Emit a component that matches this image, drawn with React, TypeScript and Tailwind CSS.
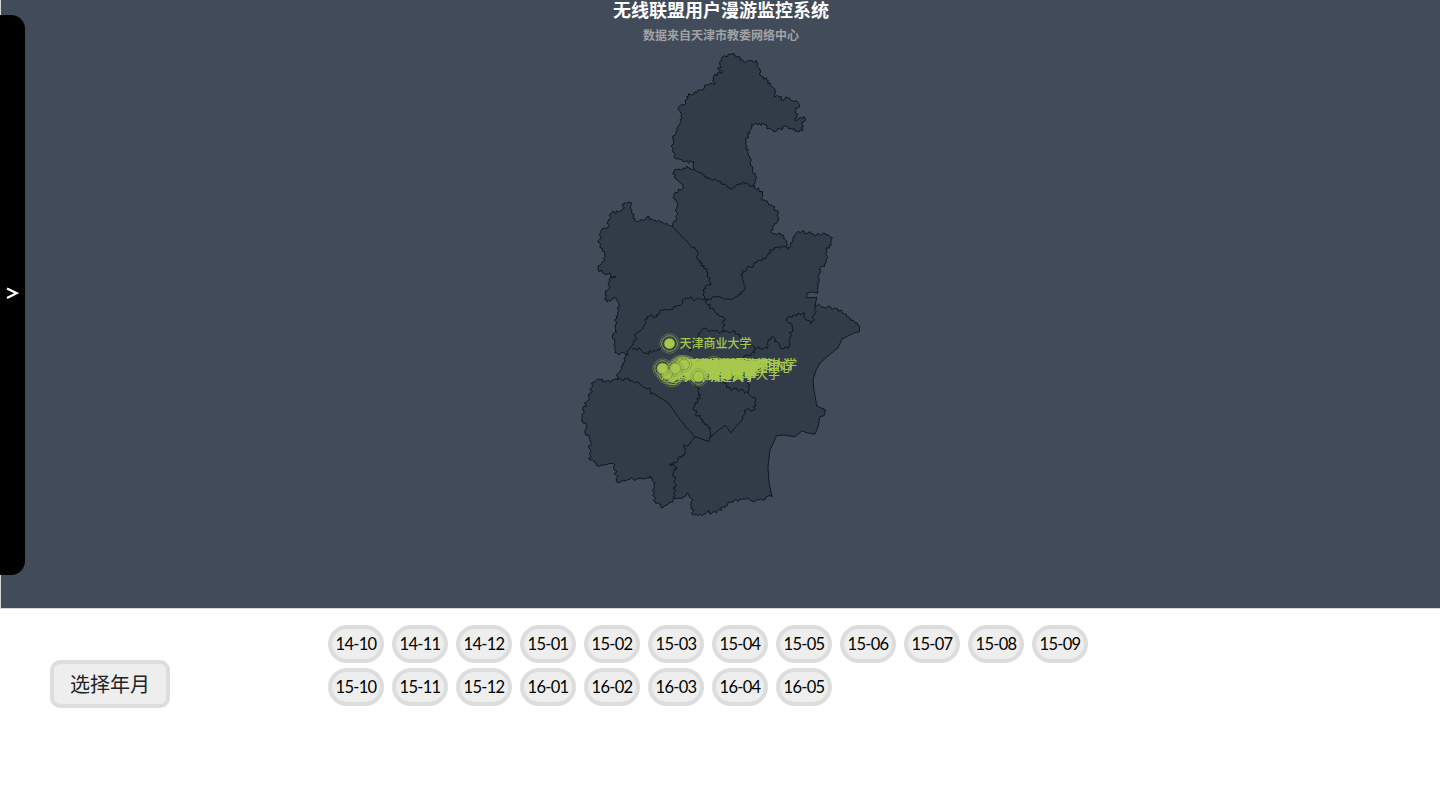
import React from "react";

type Pt = [number, number];

const parse = (s: string): Pt[] =>
  s.trim().split(/\s+/).map((p) => p.split(",").map(Number) as Pt);

// Gives a surveyed polyline the small irregular steps of a county border.
function rough(s: string, amp = 1.8): string {
  const pts = parse(s);
  let out = "";
  for (let i = 0; i < pts.length - 1; i++) {
    const [x0, y0] = pts[i];
    const [x1, y1] = pts[i + 1];
    const len = Math.hypot(x1 - x0, y1 - y0) || 1;
    const n = Math.max(1, Math.round(len / 1.7));
    for (let k = 0; k < n; k++) {
      const t = k / n;
      const x = x0 + (x1 - x0) * t;
      const y = y0 + (y1 - y0) * t;
      const h = Math.sin(x * 12.9898 + y * 78.233) * 43758.5453;
      const d = k === 0 ? 0 : (h - Math.floor(h) - 0.5) * 2 * amp;
      out += `L${(x - ((y1 - y0) / len) * d).toFixed(1)} ${(y + ((x1 - x0) / len) * d).toFixed(1)}`;
    }
  }
  const [lx, ly] = pts[pts.length - 1];
  return out + `L${lx} ${ly}`;
}

const line = (s: string, amp?: number) => "M" + rough(s, amp).slice(1);

const NORTH =
  "719,70 720,64 722,58 727,57 732,53.5 735,56 738,57 743,60.7 750,61 757,60.7 758,67 759.3,74 766.7,80 772.7,87.3 775,92 774.7,97.3 779,97 783,100 788,97.7 792,101 796,101 800,106.7 795,108 795,111.7 798,114 794.7,118.3 798,120 803.3,116.5 804.3,121.7 802,125 801.7,131 797,131 791,128 785,126 780,129 773,131 766.7,128.3 764,124.3 758,125 751.7,124.3 750,133.3 746,138 746,145 748,155 752.7,166.7 752,172 756.7,178.3 755,187.7 763,191.7 761,198.3 768,203 775,206.7 778,216.7 774,226 770,231.7 776.7,235 780,233 784,236.7 786,243 788,249.3 792.7,241.7 793,237 796.7,232.7 802,231.5 808,232.7 816.7,235 825,233.3 832.5,238 829,246 826.7,250 826,263 820,270 819,281 816.7,284 818,293";
const COAST = "818,293 812,292 807,293 806.7,298 816.7,297 815,305";
const EAST =
  "815,305 823,307 831,308 838,309 846.7,316.7 853,320 855,323 859.5,326";
const SEA =
  "859.5,326 859.5,331.7 855,332.7 850,335 841.7,339.3 838,348 826.7,357 820,363 816,370 813,380 814,390 816.7,406 825.7,410 824,415.7 820,416.7 818,426.7 815,434 808,433 801.7,431 795,436.7 784,435 776.7,435.7 770,450 768,466.7 769,483 772,496.7";
const SOUTH =
  "772,496.7 760,499 752,501 749,499 743,499 733,502 723,507 716.7,512.7 711,514 709,510 705,514 693,515 691.7,506.7 693,500 687,493 680,498 674,499 669,503 663,507.7 655,501.7 652.7,491.7 655,483 650,475.7 645,479 633,479 616.7,482 615,465 608,464 598,466 590,460 590,436 585.7,435 585.7,423 582.5,422.7 583,410 590.7,393 591.7,383 600,380 606.7,381.7 616.7,379 620,371.7 625,360 626,355 615,352.7 612.7,336 617,331.7 616,316.7 619,305 615,298 606.7,302 605,295 610,286.7 609,279 616,276.7 608,274 598,270 600,265 605,260 604,251.7 599,243 601.7,230 607,228 610,219 612,213 621.7,210.7 625,203 631.7,203 631.7,211.7 636.7,221.7 641,220 646.7,217 660,221.7 672,226 672.7,226 676.7,220 676.7,208.3 674,194 683,186.7 675,178.3 674,171.7 683.3,167.7 690,168 694,169 694,161.7 685,161.7 674,156.7 671.7,145 675,135 680,123 682,115 679,106.7 684,105 686.7,96.7 695,91.7 701,90 706.7,85 714,85 714,76 723,71.7 719,70";

const outline =
  line(NORTH) + rough(COAST, 0.3) + rough(EAST) + rough(SEA, 0.15) + rough(SOUTH) + "Z";

const borders = [
  "755,187.7 748,184 740,183.3 730,189 720,180.7 710,178.3 700,172.7 694,169",
  "690,245 694,247 696.7,250 698,260 708,273 710.7,285 705,286.7 704,293 708,305",
  "708,300 696.7,299 686.7,298 676.7,306.7 670,310.7 660,310.7 657,316.7 646.7,316.7 643,326.7 636.7,333 633,345 630,348 626,355",
  "708,305 715,311.7 724,318 724,331.7 715,331 702.7,329 700,333 697,338 694,346 690,352",
  "632,349 640,349 646.7,353 658,350 662,346",
  "785,246.7 778,247 771.7,250 766.7,258 756.7,262.7 750,267 741.7,271.7 744,290 738,296 730,300 713,296.7 707,300",
  "724,331.7 733,331 740,335 742,343 756.7,348 768,349 768,341.7 772.7,336.7 780,348 789,348 789,338 792.7,330 787,318 802.7,313 805,318 810.7,324 815.7,313 815,305",
  "756.7,348 755,353 746.7,355 743,362",
  "695.7,383 700.7,395 692.7,408 705,425 710.7,428 709,441.7",
  "743,419 744,410 754,410 756,399 748,393 740,390 730,389 721.7,380",
  "748,393 749,380",
  "616.7,379 631.7,380 642,386 650,388 650,394",
  "688,446 683,446 685,453 670,466 677,467 674,469 675,483 674,499",
];
const straightBorders = [
  "672,226 690,245",
  "650,394 653,393 668,402.7 676.7,415 685,426 695,436.7 709,441.7",
  "695,436.7 688,446",
  "709,438 725,425 730.7,432.7 743,419",
];

const campuses: [number, number, string][] = [
  [669.5, 343.5, "天津商业大学"],
  [714, 366, "天津科技大学"],
  [684, 365, "天津市教委网络中心"],
  [681, 366, "天津医科大学"],
  [686, 366, "天津中医药大学"],
  [682, 370, "天津师范大学"],
  [680, 365, "天津外国语大学"],
  [689, 367, "天津财经大学"],
  [679, 372, "天津音乐学院"],
  [687, 371, "天津体育学院"],
  [675, 375, "天津理工大学"],
  [672, 377, "天津城建大学"],
  [667, 374, "天津工业大学"],
  [662.5, 368.5, "天津农学院"],
  [675.5, 368.5, "天津美术学院"],
  [698.5, 376.5, "天津大学"],
];
const extraLabels: [number, number, string][] = [
  [677, 364, "天津职业技术师范大学"],
  [684, 367, "天津市教委网络中心"],
  [660, 374, "天津中德应用技术大学"],
  [688, 364, "天津外国语"],
  [686, 364, "天津广播电视"],
  [691, 369, "天津理工"],
  [685, 372, "天津理工大学"],
  [684, 376, "天津城建大学"],
];

const months = [
  ["14-10", "14-11", "14-12", "15-01", "15-02", "15-03", "15-04", "15-05", "15-06", "15-07", "15-08", "15-09"],
  ["15-10", "15-11", "15-12", "16-01", "16-02", "16-03", "16-04", "16-05"],
];

function RoamingMap() {
  return (
    <svg
      className="absolute inset-0 block"
      width="1440"
      height="608"
      viewBox="0 0 1440 608"
      fontFamily="'Noto Sans CJK SC', sans-serif"
      fontSize="12"
      fontWeight="500"
    >
      <path d={outline} fill="#323c48" stroke="#11151a" strokeWidth="1" />
      <g fill="none" stroke="#11151a" strokeWidth="1">
        {borders.map((b) => <path key={b} d={line(b)} />)}
        {straightBorders.map((b) => <path key={b} d={line(b, 0.2)} />)}
      </g>
      {campuses.map(([x, y, name]) => (
        <g key={name}>
          <circle cx={x} cy={y} r="9.7" fill="none" stroke="#a6c84c" strokeWidth="0.6" opacity="0.6" />
          <circle cx={x} cy={y} r="7.8" fill="none" stroke="#a6c84c" strokeWidth="0.9" opacity="0.85" />
          <circle cx={x} cy={y} r="5.3" fill="#a6c84c" stroke="#6f8740" strokeWidth="0.4" />
        </g>
      ))}
      <g fill="#a6c84c">
        <text x="679.5" y="348">天津商业大学</text>
        {extraLabels.map(([x, y, name], i) => (
          <text key={i} x={x} y={y + 4.5}>{name}</text>
        ))}
        {campuses.slice(2, 13).map(([x, y, name]) => (
          <text key={name} x={Math.max(684, x)} y={y + 4}>{name}</text>
        ))}
      </g>
      {[[684, 364.5], [667, 374], [662.5, 368.5], [675.5, 368.5], [698.5, 376.5]].map(([x, y]) => (
        <g key={x}>
          <circle cx={x} cy={y} r="7.8" fill="none" stroke="#6f8740" strokeWidth="0.4" />
          <circle cx={x} cy={y} r="5.5" fill="#a6c84c" stroke="#6f8740" strokeWidth="0.7" />
        </g>
      ))}
    </svg>
  );
}

export default function App() {
  return (
    <div className="flex h-[798px] w-[1440px] flex-col overflow-hidden bg-white font-['Lato','Noto_Sans_CJK_SC',sans-serif]">
      <section className="relative h-[609px] shrink-0 border-b border-l border-[#d5d7da] bg-[#424b59]">
        <div className="absolute -left-px top-0 h-[608px] w-[1440px]">
          <RoamingMap />
        </div>
        <header className="relative flex flex-col items-center pl-px text-center font-['Noto_Sans_CJK_SC',sans-serif]">
          <h1 className="h-[18px] text-[18px] font-bold leading-[18px] text-white">无线联盟用户漫游监控系统</h1>
          <p className="mt-2 text-xs font-bold leading-[18px] text-[#a0a2a6]">数据来自天津市教委网络中心</p>
        </header>
        <button className="absolute -left-px top-[15px] flex h-[560px] w-[25px] items-center justify-center rounded-r-[14px] bg-black text-white" aria-label="展开">
          <svg width="13" height="14" viewBox="0 0 13 14" className="-mt-[4px]" fill="none" stroke="currentColor" strokeWidth="2.3">
            <path d="M1 2.5 10.6 7.2 1 12" />
          </svg>
        </button>
      </section>
      <section className="flex pl-[50px] pt-[16px]">
        <button className="mt-[35px] h-12 w-[120px] shrink-0 rounded-[10px] border-4 border-[#dddddd] bg-[#eeeeee] text-center text-xl leading-10 text-[#222222]">
          选择年月
        </button>
        <div className="ml-[158px] flex flex-col gap-[5px]">
          {months.map((row) => (
            <div key={row[0]} className="flex gap-2">
              {row.map((m) => (
                <button key={m} className="h-[38px] w-14 rounded-[19px] border-4 border-[#dddddd] bg-[#eeeeee] text-center text-[16.5px] leading-[28px] tracking-[-0.7px] text-black">
                  {m}
                </button>
              ))}
            </div>
          ))}
        </div>
      </section>
    </div>
  );
}
